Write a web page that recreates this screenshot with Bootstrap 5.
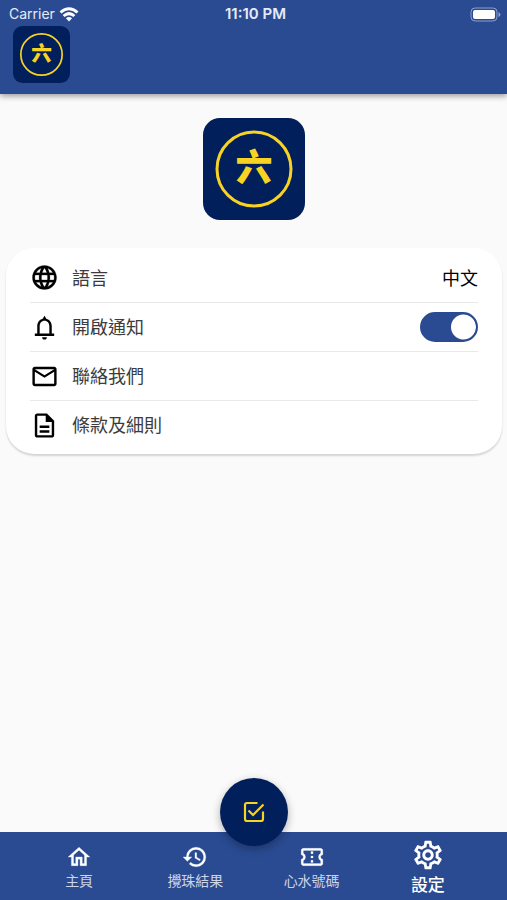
<!DOCTYPE html>
<html lang="zh-Hant">
<head>
<meta charset="utf-8">
<meta name="viewport" content="width=device-width, initial-scale=1">
<title>設定</title>
<link href="https://cdn.jsdelivr.net/npm/bootstrap@5.3.0/dist/css/bootstrap.min.css" rel="stylesheet">
<style>
  :root { --app-blue: #2a4b92; --app-navy: #001f5b; --app-gold: #f9d324; }
  body { background: #fafafa; font-family: Inter, "Noto Sans CJK TC", sans-serif; }
  svg { display: block; flex-shrink: 0; fill: currentColor; }
  .app-header { background: var(--app-blue); box-shadow: 0 2px 6px rgba(0,0,0,.4); padding-bottom: 11px; }
  .status-row { height: 26px; padding: 2px 5px 0 9px; font-size: 14px; line-height: 24px; color: #e6ebf7; }
  .status-row > * { flex: 1 1 0; }
  .status-time { font-size: 15px; }
  .header-logo { padding-left: 13px; }
  .logo-small { width: 57px; height: 57px; }
  .logo-large { width: 102px; height: 102px; }
  .logo-char { font-family: "Noto Sans CJK TC", sans-serif; font-weight: 900; font-size: 37px; }
  .settings-card { margin: 28px 5px 0 6px; padding: 5px 24px; border-radius: 28px; box-shadow: 0 2px 2px rgba(0,0,0,.15); }
  .setting-row { height: 49px; font-size: 18px; line-height: 24px; color: #3c3c3c; gap: 13px; }
  .setting-row + .setting-row { border-top: 1px solid #e8e8e8; }
  .setting-row svg { width: 29px; height: 29px; color: #000; }
  .setting-row a, .setting-row label { color: inherit; padding-top: 2px; }
  .notify-switch.form-check-input { width: 58px; height: 30px; margin: 0; border: 2px solid var(--app-blue); background-color: var(--app-blue); background-size: 29px 29px;
    background-image: radial-gradient(circle, #fff 12px, transparent 13px); background-position: right center; background-origin: border-box; }
  .tab-bar { background: var(--app-blue); height: 68px; padding: 0 21px; }
  .tab-link { flex: 1 1 0; color: #ccd5ea; font-size: 14px; line-height: 18px; padding-top: 12px; gap: 2px; }
  .tab-link svg { width: 26px; height: 26px; color: #fff; }
  .tab-link.active { color: #fff; font-size: 17px; line-height: 22px; padding-top: 6px; gap: 2px; font-weight: 500; }
  .tab-link.active svg { width: 34px; height: 34px; }
  .check-button { bottom: 54px; width: 68px; height: 68px; background: var(--app-navy); color: var(--app-gold); box-shadow: 0 3px 8px rgba(0,0,0,.3); }
</style>
<script src="https://cdn.jsdelivr.net/npm/bootstrap@5.3.0/dist/js/bootstrap.bundle.min.js"></script>
</head>
<body>
<div class="min-vh-100 d-flex flex-column">
  <header class="app-header">
    <div class="status-row d-flex align-items-center">
      <div class="d-flex align-items-center gap-1">
        <span>Carrier</span>
        <svg width="20" height="15" viewBox="0 0 20 15" fill="none" stroke="#fff" stroke-width="3"><path d="M1.5 5.5Q10-2 18.500 5.500M4.600 9Q10 4.200 15.400 9" fill="none"/><path d="M10 14.500L6.900 11.300Q10 8.600 13.100 11.300Z" fill="#fff" stroke="none"/></svg>
      </div>
      <div class="status-time text-center fw-semibold">11:10 PM</div>
      <div class="d-flex justify-content-end">
        <svg width="32" height="15" viewBox="0 0 32 15"><rect x="1" y="1" width="26" height="13" rx="4" fill="none" stroke="#8c9fcd" stroke-width="1"/><rect x="3" y="3" width="22" height="9" rx="2" fill="#fff"/><path d="M28.500 5v5q2-1 2-2.500t-2-2.500z" fill="#8c9fcd"/></svg>
      </div>
    </div>
    <div class="header-logo">
      <svg class="logo-small" viewBox="0 0 102 102">
        <rect width="102" height="102" rx="17" fill="#001f5b"/>
        <circle cx="51" cy="51" r="37" fill="none" stroke="#f9d324" stroke-width="3"/>
        <text x="51" y="63" text-anchor="middle" class="logo-char" fill="#f9d324">六</text>
      </svg>
    </div>
  </header>

  <main class="flex-grow-1 pt-4">
    <svg class="logo-large mx-auto" viewBox="0 0 102 102">
      <rect width="102" height="102" rx="17" fill="#001f5b"/>
      <circle cx="51" cy="51" r="37" fill="none" stroke="#f9d324" stroke-width="3"/>
      <text x="51" y="63" text-anchor="middle" class="logo-char" fill="#f9d324">六</text>
    </svg>
    <section class="settings-card bg-white">
      <div class="setting-row d-flex align-items-center">
        <svg viewBox="0 0 24 24"><path d="M11.990 2C6.470 2 2 6.480 2 12s4.470 10 9.990 10C17.520 22 22 17.520 22 12S17.520 2 11.990 2zm6.930 6h-2.950c-.32-1.250-.78-2.450-1.380-3.560 1.840.63 3.370 1.910 4.330 3.560zM12 4.040c.83 1.200 1.480 2.530 1.910 3.960h-3.820c.43-1.430 1.080-2.760 1.910-3.960zM4.260 14C4.100 13.360 4 12.690 4 12s.1-1.360.26-2h3.380c-.08.66-.14 1.320-.14 2 0 .68.06 1.340.14 2H4.260zm.82 2h2.950c.32 1.250.78 2.450 1.380 3.560-1.840-.63-3.370-1.900-4.330-3.560zm2.950-8H5.080c.96-1.660 2.490-2.930 4.330-3.560C8.810 5.550 8.350 6.750 8.030 8zM12 19.960c-.83-1.200-1.480-2.530-1.910-3.960h3.820c-.43 1.430-1.080 2.760-1.910 3.960zM14.340 14H9.660c-.09-.66-.16-1.320-.16-2 0-.68.07-1.350.16-2h4.680c.09.65.16 1.320.16 2 0 .68-.07 1.340-.16 2zm.25 5.560c.6-1.110 1.060-2.310 1.380-3.560h2.950c-.96 1.650-2.490 2.930-4.330 3.560zM16.360 14c.08-.66.14-1.320.14-2 0-.68-.06-1.340-.14-2h3.380c.16.64.26 1.310.26 2s-.1 1.360-.26 2h-3.380z" stroke="currentColor" stroke-width=".2"/></svg>
        <a href="#language" class="d-flex flex-grow-1 justify-content-between text-decoration-none"><span>語言</span><span class="text-black">中文</span></a>
      </div>
      <div class="setting-row d-flex align-items-center">
        <svg viewBox="0 0 24 24"><path d="M12 22c1.100 0 2-.9 2-2h-4c0 1.100.9 2 2 2zm6-5v-6c0-3.070-1.630-5.640-4.500-6.320L12 2.200l-1.500 2.480C7.640 5.360 6 7.920 6 11v6H4v2h16v-2h-2zm-2 0H8v-6c0-2.480 1.510-4.500 4-4.500s4 2.020 4 4.500v6z"/></svg>
        <label for="notify" class="flex-grow-1">開啟通知</label>
        <div class="form-switch p-0 m-0 d-flex"><input class="form-check-input notify-switch shadow-none" type="checkbox" role="switch" id="notify" checked></div>
      </div>
      <div class="setting-row d-flex align-items-center">
        <svg viewBox="0 0 24 24"><path d="M22 6c0-1.100-.9-2-2-2H4c-1.100 0-2 .9-2 2v12c0 1.100.9 2 2 2h16c1.100 0 2-.9 2-2V6zm-2 0l-8 5-8-5h16zm0 12H4V8l8 5 8-5v10z"/></svg>
        <a href="#contact" class="flex-grow-1 text-decoration-none">聯絡我們</a>
      </div>
      <div class="setting-row d-flex align-items-center">
        <svg viewBox="0 0 24 24"><path d="M8 16h8v2H8zm0-4h8v2H8zm6-10H6c-1.100 0-2 .9-2 2v16c0 1.100.89 2 1.990 2H18c1.100 0 2-.9 2-2V8l-6-6zm4 18H6V4h7v5h5v11z"/></svg>
        <a href="#terms" class="flex-grow-1 text-decoration-none">條款及細則</a>
      </div>
    </section>
  </main>

  <nav class="tab-bar sticky-bottom d-flex" aria-label="主選單">
    <a href="#home" class="tab-link d-flex flex-column align-items-center text-decoration-none">
      <svg viewBox="0 0 24 24"><path d="M12 5.690l5 4.500V18h-2v-6H9v6H7v-7.810l5-4.500M12 3L2 12h3v8h6v-6h2v6h6v-8h3L12 3z" stroke="currentColor" stroke-width=".3"/></svg>
      <span>主頁</span></a>
    <a href="#results" class="tab-link d-flex flex-column align-items-center text-decoration-none">
      <svg viewBox="0 0 24 24"><path d="M13 3a9 9 0 0 0-9 9H1l3.890 3.890.07.14L9 12H6c0-3.870 3.130-7 7-7s7 3.130 7 7-3.130 7-7 7c-1.930 0-3.680-.79-4.940-2.060l-1.420 1.420A8.954 8.954 0 0 0 13 21a9 9 0 0 0 0-18zm-1 5v5l4.280 2.540.72-1.210-3.500-2.080V8H12z" stroke="currentColor" stroke-width=".3"/></svg>
      <span>攪珠結果</span></a>
    <a href="#numbers" class="tab-link d-flex flex-column align-items-center text-decoration-none">
      <svg viewBox="0 0 24 24"><path d="M22 10V6c0-1.110-.9-2-2-2H4c-1.100 0-1.990.89-1.990 2v4c1.100 0 1.990.9 1.990 2s-.89 2-2 2v4c0 1.100.9 2 2 2h16c1.100 0 2-.9 2-2v-4c-1.100 0-2-.9-2-2s.9-2 2-2zm-2-1.460c-1.190.69-2 1.990-2 3.460s.81 2.770 2 3.460V18H4v-2.540c1.190-.69 2-1.990 2-3.460 0-1.480-.8-2.770-1.990-3.460L4 6h16v2.540zM11 15h2v2h-2zm0-4h2v2h-2zm0-4h2v2h-2z" stroke="currentColor" stroke-width=".2"/></svg>
      <span>心水號碼</span></a>
    <a href="#settings" aria-current="page" class="tab-link active d-flex flex-column align-items-center text-decoration-none">
      <svg viewBox="0 0 24 24"><path d="M19.430 12.980c.04-.32.07-.64.07-.98 0-.34-.03-.66-.07-.98l2.110-1.650c.19-.15.24-.42.12-.64l-2-3.460c-.09-.16-.26-.25-.44-.25-.06 0-.12.01-.17.03l-2.490 1c-.52-.4-1.080-.73-1.690-.98l-.38-2.650C14.460 2.180 14.250 2 14 2h-4c-.25 0-.46.18-.49.42l-.38 2.650c-.61.25-1.170.59-1.690.98l-2.490-1c-.06-.02-.12-.03-.18-.03-.17 0-.34.09-.43.25l-2 3.460c-.13.22-.07.49.12.64l2.110 1.650c-.04.32-.07.65-.07.98 0 .33.03.66.07.98l-2.110 1.650c-.19.15-.24.42-.12.64l2 3.460c.09.16.26.25.44.25.06 0 .12-.01.17-.03l2.490-1c.52.4 1.080.73 1.690.98l.38 2.650c.03.24.24.42.49.42h4c.25 0 .46-.18.49-.42l.38-2.650c.61-.25 1.170-.59 1.690-.98l2.490 1c.06.02.12.03.18.03.17 0 .34-.09.43-.25l2-3.460c.12-.22.07-.49-.12-.64l-2.110-1.650zm-1.980-1.710c.04.31.05.52.05.73 0 .21-.02.43-.05.73l-.14 1.130.89.7 1.080.84-.7 1.210-1.270-.51-1.040-.42-.9.68c-.43.32-.84.56-1.250.73l-1.060.43-.16 1.130-.2 1.350h-1.400l-.19-1.350-.16-1.130-1.060-.43c-.43-.18-.83-.41-1.230-.71l-.91-.7-1.060.43-1.270.51-.7-1.210 1.080-.84.89-.7-.14-1.130c-.03-.31-.05-.54-.05-.74s.02-.43.05-.73l.14-1.130-.89-.7-1.080-.84.7-1.210 1.270.51 1.040.42.9-.68c.43-.32.84-.56 1.250-.73l1.060-.43.16-1.130.2-1.350h1.390l.19 1.350.16 1.130 1.060.43c.43.18.83.41 1.230.71l.91.7 1.060-.43 1.270-.51.7 1.210-1.070.85-.89.7.14 1.130zM12 8c-2.210 0-4 1.790-4 4s1.790 4 4 4 4-1.790 4-4-1.790-4-4-4zm0 6c-1.100 0-2-.9-2-2s.9-2 2-2 2 .9 2 2-.9 2-2 2z"/></svg>
      <span>設定</span></a>
    <button type="button" class="check-button btn rounded-circle border-0 p-0 d-flex align-items-center justify-content-center position-absolute start-50 translate-middle-x" aria-label="核對">
      <svg width="24" height="24" viewBox="0 0 24 24"><path d="M15.500 3H5Q3 3 3 5V19Q3 21 5 21H19Q21 21 21 19V11.500M6.500 10.500L11 15L21.500 4.500" fill="none" stroke="currentColor" stroke-width="2.200"/></svg>
    </button>
  </nav>
</div>
</body>
</html>
